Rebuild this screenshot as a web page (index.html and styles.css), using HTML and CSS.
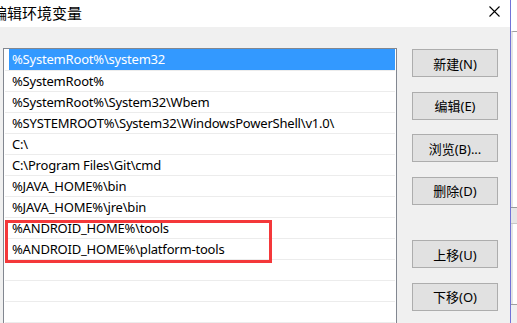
FILE: index.html
```html
<html>
<head>
    <meta charset="utf-8">
    <link rel="stylesheet" href="styles.css">
</head>
<body>
    <div class="screen">
        <div class="dialog">
            <div class="titlebar">
                <span class="title">编辑环境变量</span>
                <svg class="close" width="11" height="11" viewBox="0 0 11 11">
                    <path d="M0.5 0.5 L10.5 10.5 M10.5 0.5 L0.5 10.5" stroke="#000" stroke-width="1.1" fill="none"/>
                </svg>
            </div>
            <div class="content">
                <div class="list">
                    <div class="row selected"><span class="item">%SystemRoot%\system32</span></div>
                    <div class="row"><span class="item">%SystemRoot%</span></div>
                    <div class="row"><span class="item">%SystemRoot%\System32\Wbem</span></div>
                    <div class="row"><span class="item">%SYSTEMROOT%\System32\WindowsPowerShell\v1.0\</span></div>
                    <div class="row"><span class="item">C:\</span></div>
                    <div class="row"><span class="item">C:\Program Files\Git\cmd</span></div>
                    <div class="row"><span class="item">%JAVA_HOME%\bin</span></div>
                    <div class="row"><span class="item">%JAVA_HOME%\jre\bin</span></div>
                    <div class="row"><span class="item">%ANDROID_HOME%\tools</span></div>
                    <div class="row"><span class="item">%ANDROID_HOME%\platform-tools</span></div>
                    <div class="row"><span class="item"></span></div>
                    <div class="row"><span class="item"></span></div>
                    <div class="row"><span class="item"></span></div>
                    <div class="highlight"></div>
                </div>
                <div class="buttons">
                    <div class="btn">新建(N)</div>
                    <div class="btn">编辑(E)</div>
                    <div class="btn">浏览(B)...</div>
                    <div class="btn">删除(D)</div>
                    <div class="btn move-up">上移(U)</div>
                    <div class="btn">下移(O)</div>
                </div>
            </div>
        </div>
        <div class="behind">
            <div class="behind-top"></div>
            <div class="behind-mid"></div>
            <div class="behind-band"></div>
            <div class="behind-low"></div>
            <div class="behind-bottom"></div>
        </div>
    </div>
</body>
</html>
```

FILE: styles.css
```css
body {
    margin: 0;
    background: #ffffff;
    overflow: hidden;
    font-family: "Noto Sans", "Noto Sans CJK SC", sans-serif;
}
.screen {
    display: flex;
    width: 517px;
    height: 323px;
    overflow: hidden;
}
.dialog {
    width: 510px;
    flex-shrink: 0;
    background: #f0f0f0;
    border-right: 1px solid #7272d8;
    display: flex;
    flex-direction: column;
    overflow: hidden;
}
.titlebar {
    height: 27px;
    flex-shrink: 0;
    background: #ffffff;
    display: flex;
    align-items: center;
    justify-content: space-between;
    padding-right: 10px;
}
.title {
    margin-left: -8px;
    font-family: "Noto Sans CJK SC", sans-serif;
    font-size: 15px;
    color: #000;
    margin-top: -2px;
}
.close {
    margin-top: -5px;
}
.content {
    display: flex;
    flex-shrink: 0;
    padding: 21px 0 0 3px;
    gap: 15px;
}
.list {
    position: relative;
    width: 390px;
    height: 300px;
    flex-shrink: 0;
    background: #ffffff;
    border: 1px solid #828790;
    padding: 1px 1px 0 1px;
}
.row {
    height: 21px;
    box-sizing: border-box;
    border-bottom: 1px solid #ececec;
    display: flex;
}
.item {
    flex: 1;
    margin-left: 4px;
    padding-left: 3px;
    font-size: 13px;
    line-height: 20px;
    color: #000;
    white-space: nowrap;
    letter-spacing: -0.2px;
}
.selected .item {
    background: #3399ff;
    color: #ffffff;
    margin-top: -1px;
}
/* red annotation box over the two android rows */
.highlight {
    position: absolute;
    left: 1px;
    top: 171px;
    width: 261px;
    height: 37px;
    border: 3px solid #f4383a;
}
.buttons {
    display: flex;
    flex-direction: column;
    gap: 14.6px;
    padding-top: 1px;
}
.btn {
    width: 84px;
    height: 26px;
    background: #e1e1e1;
    border: 1px solid #adadad;
    display: flex;
    align-items: center;
    justify-content: center;
    font-size: 13px;
    color: #000;
}
.move-up {
    margin-top: 21px;
}
.behind {
    flex: 1;
    display: flex;
    flex-direction: column;
    background: #ffffff;
}
.behind-top {
    height: 31px;
}
.behind-mid {
    height: 175px;
    border-top: 1px solid #a0a0a0;
    border-left: 2px solid #e4e4e4;
}
.behind-band {
    height: 15px;
    background: #e6e6e6;
    border-top: 1px solid #9a9a9a;
    border-bottom: 1px solid #c8c8c8;
}
.behind-low {
    height: 80px;
    border-left: 2px solid #e4e4e4;
}
.behind-bottom {
    flex: 1;
    border-top: 1px solid #a0a0a0;
    background: #f0f0f0;
}
```
